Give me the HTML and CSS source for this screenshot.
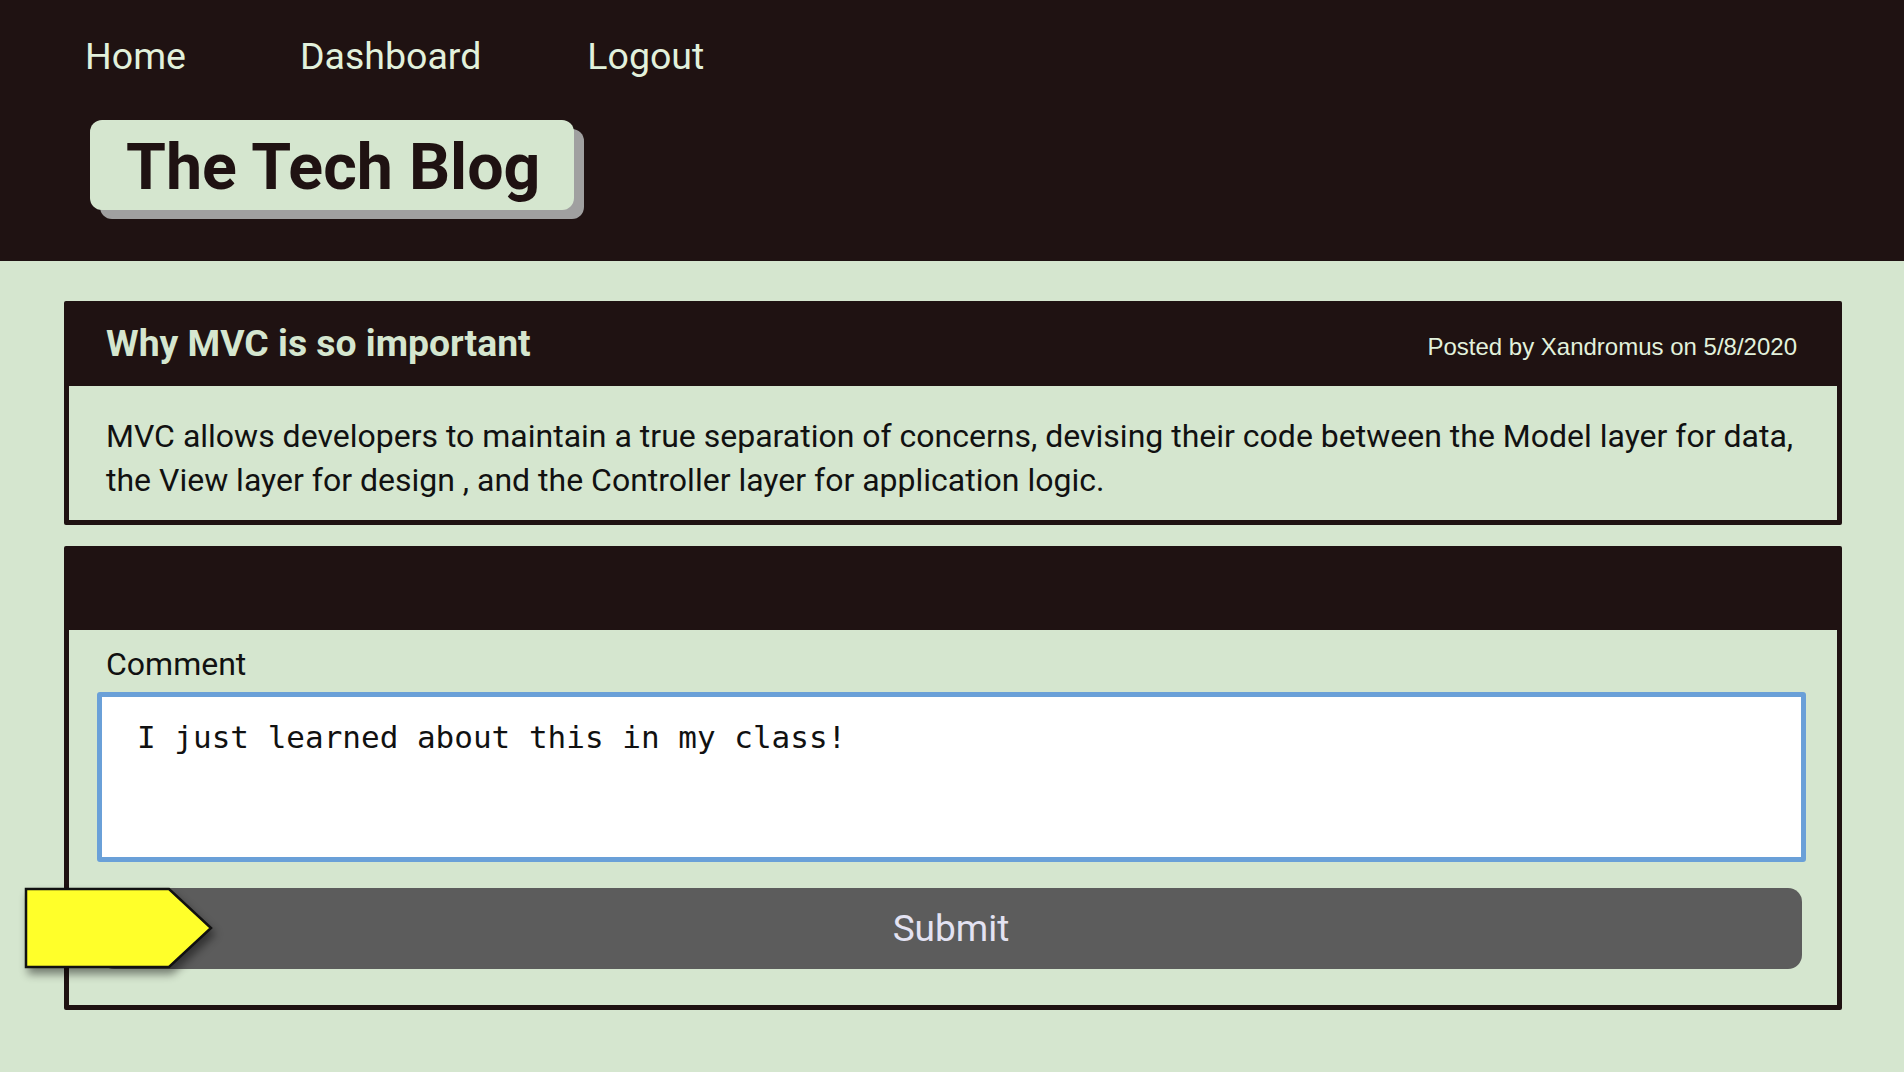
FILE: index.html
```html
<!DOCTYPE html>
<html lang="en">
<head>
<meta charset="utf-8">
<title>The Tech Blog</title>
<link rel="stylesheet" href="styles.css">
</head>
<body>
<header class="site-header">
  <nav class="nav">
    <a class="nav-link" href="#">Home</a>
    <a class="nav-link" href="#">Dashboard</a>
    <a class="nav-link" href="#">Logout</a>
  </nav>
  <div class="logo-wrap">
    <h1 class="logo">The Tech Blog</h1>
  </div>
</header>
<main class="main">
  <section class="card">
    <div class="card-header">
      <h2 class="post-title">Why MVC is so important</h2>
      <span class="post-meta">Posted by Xandromus on 5/8/2020</span>
    </div>
    <div class="card-body">
      <p class="post-text">MVC allows developers to maintain a true separation of concerns, devising their code between the Model layer for data, the View layer for design , and the Controller layer for application logic.</p>
    </div>
  </section>
  <section class="card card-comment">
    <div class="card-header"></div>
    <form class="card-body comment-form">
      <label class="comment-label" for="comment">Comment</label>
      <textarea id="comment" class="comment-input">I just learned about this in my class!</textarea>
      <div class="submit-row">
        <button type="button" class="submit-btn">Submit</button>
        <svg class="pointer" width="192" height="84" viewBox="0 0 192 84">
          <polygon points="2,2 145,2 187,41 145,80 2,80" fill="#ffff2a" stroke="#111" stroke-width="2.5" stroke-linejoin="miter"/>
        </svg>
      </div>
    </form>
  </section>
</main>
</body>
</html>
```

FILE: styles.css
```css
html, body {
  margin: 0;
  padding: 0;
}
body {
  background: #d5e6cf;
  font-family: Roboto, "Liberation Sans", sans-serif;
  min-height: 1072px;
}
.site-header {
  background: #1f1212;
  height: 261px;
  box-sizing: border-box;
  padding: 34px 0 0 85px;
}
.nav {
  display: flex;
  gap: 106px;
}
.nav-link {
  color: #e2f1dc;
  text-decoration: none;
  font-size: 37.5px;
  line-height: 44px;
}
.nav-link:first-child {
  margin-right: 8px;
}
.logo-wrap {
  margin-top: 42px;
  margin-left: 5px;
}
.logo {
  display: inline-block;
  box-sizing: border-box;
  margin: 0;
  background: #d5e6cf;
  color: #1f1212;
  font-size: 64.5px;
  font-weight: 700;
  line-height: 86px;
  height: 90px;
  padding: 4px 34px 0 36px;
  border-radius: 12px;
  box-shadow: 10px 9px 0 #a0a0a0;
}
.main {
  padding: 40px 62px 0 64px;
}
.card {
  background: #1f1212;
  padding: 0 5px 5px;
  border-radius: 2px;
}
.card-comment {
  margin-top: 21px;
}
.card-header {
  height: 85px;
  padding: 0 40px 0 37px;
  display: flex;
  align-items: center;
  justify-content: space-between;
}
.card-comment .card-header {
  height: 84px;
}
.post-title {
  margin: 0;
  color: #d5e6cf;
  font-size: 37.3px;
  font-weight: 700;
  margin-top: -2px;
}
.post-meta {
  color: #e2f1dc;
  font-family: "Liberation Sans", Arial, sans-serif;
  font-size: 24px;
  margin-top: 6px;
}
.card-body {
  background: #d5e6cf;
}
.post-text {
  margin: 0;
  padding: 28px 37px 18px;
  color: #111;
  font-size: 32px;
  line-height: 44px;
}
.comment-form {
  display: flex;
  flex-direction: column;
  padding: 15px 31px 36px 28px;
}
.comment-label {
  color: #111;
  font-size: 32px;
  line-height: 37px;
  margin-left: 9px;
  margin-top: 1px;
  margin-bottom: -1px;
}
.comment-input {
  margin-top: 10px;
  height: 170px;
  box-sizing: border-box;
  border: 5px solid #6aa0d8;
  border-radius: 3px;
  background: #fff;
  padding: 22px 35px 18px;
  font-family: "DejaVu Sans Mono", monospace;
  font-size: 31px;
  line-height: 37px;
  color: #111;
  resize: none;
  outline: none;
}
.submit-row {
  position: relative;
  margin-top: 26px;
  padding: 0 4px 0 3px;
}
.submit-btn {
  display: block;
  width: 100%;
  height: 81px;
  border: none;
  border-radius: 14px;
  background: #5c5c5c;
  color: #e3e2f2;
  font-family: Roboto, sans-serif;
  font-size: 37px;
  cursor: pointer;
}
.pointer {
  position: absolute;
  left: -73px;
  top: -1px;
  filter: drop-shadow(3px 6px 4px rgba(0, 0, 0, 0.45));
}
```
